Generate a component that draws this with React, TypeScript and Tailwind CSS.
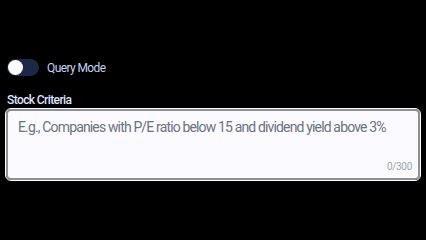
import { useState } from "react";

const App = () => {
  const [queryMode, setQueryMode] = useState(false);
  const [criteria, setCriteria] = useState("");

  return (
    <div
      className="w-[426px] h-[240px] bg-black px-[6px] pt-[59px]"
      style={{ fontFamily: "Roboto, Inter, 'Liberation Sans', sans-serif" }}
    >
      <div className="flex items-center gap-[8px] pl-[1px]">
        <button
          onClick={() => setQueryMode(!queryMode)}
          className="relative w-[32px] h-[17px] rounded-full bg-[#1d2848] flex items-center px-[1px]"
        >
          <span className="w-[15px] h-[15px] rounded-full bg-white block" />
        </button>
        <span className="text-[12px] tracking-[-0.6px] text-[#c3d0f5] leading-[16px]">
          Query Mode
        </span>
      </div>

      <div className="mt-[17px] pl-[1px] text-[12px] tracking-[-0.6px] text-[#dde5ff] font-medium leading-[14px]">
        Stock Criteria
      </div>

      <div className="mt-[2px] relative">
        <textarea
          value={criteria}
          onChange={(e) => setCriteria(e.target.value)}
          maxLength={300}
          placeholder="E.g., Companies with P/E ratio below 15 and dividend yield above 3%"
          className="block w-full h-[71px] resize-none rounded-[5px] border-2 border-[#8d9099] outline outline-1 outline-white bg-[#fbfbff] px-[10px] pt-[6px] text-[14px] tracking-[-0.85px] leading-[20px] text-gray-800 placeholder:text-[#6b7280]"
        />
        <span className="absolute right-[8px] bottom-[6px] text-[10px] tracking-[-0.3px] text-[#9ca3af]">
          {criteria.length}/300
        </span>
      </div>
    </div>
  );
};

export default App;
